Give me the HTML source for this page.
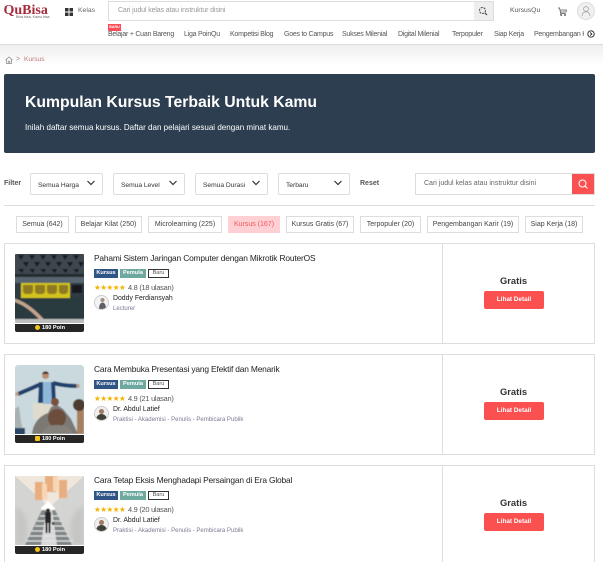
<!DOCTYPE html>
<html><head><meta charset="utf-8">
<style>
*{box-sizing:border-box}
html,body{margin:0;padding:0;width:603px;height:562px;overflow:hidden;background:#fff}
body{font-family:"Liberation Sans",sans-serif;color:#333}
#w{position:relative;width:603px;height:562px;overflow:hidden;background:#fff}
.a{position:absolute;white-space:nowrap}
.nav{top:30px;font-size:7px;letter-spacing:-.24px;color:#555;line-height:10px}
.sel{position:absolute;top:173px;height:22px;border:1px solid #ddd;border-radius:2px;background:#fff}
.sel span{position:absolute;left:7px;top:7px;font-size:6.7px;letter-spacing:-.03px;color:#333;white-space:nowrap;line-height:9px}
.sel svg{position:absolute;top:5px}
.chip{position:absolute;top:216px;height:17px;border:1px solid #ddd;font-size:7px;line-height:15px;text-align:center;color:#444;white-space:nowrap;background:#fff}
.card{position:absolute;left:4px;width:591px;height:101px;border:1px solid #ddd}
.div{position:absolute;left:437px;top:0;bottom:0;width:1px;background:#ddd}
.tt{position:absolute;left:89px;top:9px;font-size:8.4px;letter-spacing:-.17px;color:#222;white-space:nowrap;line-height:11px}
.b{position:absolute;top:25px;height:9px;font-size:5.6px;font-weight:bold;line-height:9px;text-align:center;color:#fff}
.st{position:absolute;left:89px;top:39px;font-size:7.6px;color:#f5b301;letter-spacing:-.55px;line-height:10px}
.rt{position:absolute;left:123px;top:37.500px;font-size:7.4px;letter-spacing:-.25px;color:#555;line-height:11px;white-space:nowrap}
.av{position:absolute;left:89px;top:51px;width:15px;height:15px;border-radius:50%;border:1px solid #ccc;overflow:hidden;background:#eee}
.nm{position:absolute;left:108px;top:49.500px;font-size:6.9px;color:#222;line-height:10px;white-space:nowrap}
.jb{position:absolute;left:108px;top:60.500px;font-size:6.050px;color:#7c7c95;line-height:8px;white-space:nowrap}
.th{position:absolute;left:10px;top:10px;width:69px;height:69px;overflow:hidden;border-radius:1px}
.th svg{display:block}
.pt{position:absolute;left:10px;top:80px;width:69px;height:8px;background:#262626;border-radius:0 0 2px 2px;color:#fff;font-size:5.6px;font-weight:bold;line-height:8px;padding-left:27px}
.pt i{position:absolute;left:20px;top:1px;width:5px;height:5px;background:#f3c318;border-radius:50%}
.gr{position:absolute;left:437px;width:143px;top:31px;text-align:center;font-size:9.4px;font-weight:bold;color:#333;line-height:12px}
.btn{position:absolute;left:479px;top:47px;width:60px;height:18px;background:#fb5050;border-radius:2px;color:#fff;font-size:6.4px;font-weight:bold;text-align:center;line-height:17px}
</style></head><body><div id="w">

<svg width="0" height="0" style="position:absolute"><defs><filter id="bl" x="-5%" y="-5%" width="110%" height="110%"><feGaussianBlur stdDeviation=".55"/></filter><filter id="bh" x="-20%" y="-20%" width="140%" height="140%"><feGaussianBlur stdDeviation="2"/></filter></defs></svg>

<!-- Header -->
<div class="a" style="left:0;top:0;width:603px;height:45px;background:#fff;border-bottom:1px solid #ddd"></div>
<div class="a" style="left:0;top:45px;width:603px;height:20px;background:linear-gradient(#eeeeee,#fff)"></div>
<div class="a" style="left:3.500px;top:2.500px;font-family:'Liberation Serif',serif;font-size:14px;font-weight:bold;color:#a82b3c;line-height:16px">QuBisa</div>
<div class="a" style="left:16px;top:14.500px;font-size:3.600px;color:#666;line-height:5px">Bisa bisa, Kamu bisa</div>
<svg class="a" style="left:65px;top:8px" width="8" height="8"><path fill="#333" d="M0 0h3.500v3.500H0zM4.500 0H8v3.500H4.500zM0 4.500h3.500V8H0zM4.500 4.500H8V8H4.500z"/></svg>
<div class="a" style="left:78px;top:5.500px;font-size:6.800px;color:#666;line-height:10px">Kelas</div>
<div class="a" style="left:108px;top:1px;width:386px;height:20px;border:1px solid #ddd;background:#fff"></div>
<div class="a" style="left:474px;top:2px;width:19px;height:18px;background:#eee"></div>
<svg class="a" style="left:478px;top:6px" width="10" height="10" viewBox="0 0 10 10"><circle cx="4.500" cy="4.500" r="3" fill="none" stroke="#444" stroke-width="1" stroke-dasharray="2 1"/><path d="M7 7l2 2" stroke="#444" stroke-width="1.200"/></svg>
<div class="a" style="left:118px;top:5.500px;font-size:7px;letter-spacing:-.12px;color:#999;line-height:10px">Cari judul kelas atau instruktur disini</div>
<div class="a" style="left:510px;top:5.500px;font-size:6.800px;color:#555;line-height:10px">KursusQu</div>
<svg class="a" style="left:556.500px;top:6px" width="11" height="11" viewBox="0 0 11 11" fill="none" stroke="#555" stroke-width=".7"><path d="M1 2h1.600l1 5.500h5M3 4h6.500l-.6 2H3.400"/><circle cx="4.200" cy="9" r=".7"/><circle cx="8" cy="9" r=".7"/></svg>
<div class="a" style="left:577px;top:2px;width:18px;height:18px;border-radius:50%;background:#f0f0f0;border:1px solid #ddd"></div>
<svg class="a" style="left:580px;top:5px" width="12" height="12" viewBox="0 0 12 12" fill="none" stroke="#999" stroke-width=".7"><circle cx="6" cy="4" r="2.400"/><path d="M2 11c.4-3 2-4.200 4-4.200s3.600 1.200 4 4.200"/></svg>

<div class="a nav" style="left:108px">Belajar + Cuan Bareng</div>
<div class="a" style="left:108px;top:24px;width:13px;height:7px;background:#fb4d55;color:#fff;font-size:3.600px;font-weight:bold;text-align:center;line-height:7px">BARU</div>
<div class="a nav" style="left:184px">Liga PoinQu</div>
<div class="a nav" style="left:230px">Kompetisi Blog</div>
<div class="a nav" style="left:284px">Goes to Campus</div>
<div class="a nav" style="left:342px">Sukses Milenial</div>
<div class="a nav" style="left:398px">Digital Milenial</div>
<div class="a nav" style="left:452px">Terpopuler</div>
<div class="a nav" style="left:494px">Siap Kerja</div>
<div class="a nav" style="left:534px;width:50px;overflow:hidden">Pengembangan Karir</div>
<svg class="a" style="left:587px;top:30px" width="8" height="8" viewBox="0 0 8 8" fill="none" stroke="#222" stroke-width=".9"><circle cx="4" cy="4" r="3.200"/><path d="M3.200 2.500L4.800 4 3.200 5.500"/></svg>

<!-- Breadcrumb -->
<svg class="a" style="left:5px;top:56px" width="8" height="8" viewBox="0 0 8 8" fill="none" stroke="#888" stroke-width=".7"><path d="M.5 4L4 1l3.500 3M1.500 3.500V7.500h5V3.500M3.200 7.500V5.200h1.600v2.300"/></svg>
<div class="a" style="left:16px;top:55px;font-size:7px;color:#a88;line-height:10px">&gt;</div>
<div class="a" style="left:24px;top:55px;font-size:6.600px;color:#c07a7a;line-height:10px">Kursus</div>

<!-- Hero -->
<div class="a" style="left:4px;top:74px;width:591px;height:79px;background:#2c3e50;border-radius:2px"></div>
<div class="a" style="left:25px;top:92.500px;font-size:15.750px;font-weight:bold;color:#fff;line-height:19px">Kumpulan Kursus Terbaik Untuk Kamu</div>
<div class="a" style="left:25px;top:122.500px;font-size:8.050px;color:#fff;line-height:10px">Inilah daftar semua kursus. Daftar dan pelajari sesuai dengan minat kamu.</div>

<!-- Filters -->
<div class="a" style="left:4px;top:179px;font-size:7px;font-weight:bold;color:#555;line-height:9px">Filter</div>
<div class="sel" style="left:30px;width:73px"><span>Semua Harga</span><svg style="left:55px" width="10" height="8" viewBox="0 0 10 8"><path d="M1.500 2l3.500 3.500L8.500 2" fill="none" stroke="#333" stroke-width="1.200"/></svg></div>
<div class="sel" style="left:113px;width:72px"><span>Semua Level</span><svg style="left:54px" width="10" height="8" viewBox="0 0 10 8"><path d="M1.500 2l3.500 3.500L8.500 2" fill="none" stroke="#333" stroke-width="1.200"/></svg></div>
<div class="sel" style="left:195px;width:73px"><span>Semua Durasi</span><svg style="left:55px" width="10" height="8" viewBox="0 0 10 8"><path d="M1.500 2l3.500 3.500L8.500 2" fill="none" stroke="#333" stroke-width="1.200"/></svg></div>
<div class="sel" style="left:278px;width:72px"><span>Terbaru</span><svg style="left:54px" width="10" height="8" viewBox="0 0 10 8"><path d="M1.500 2l3.500 3.500L8.500 2" fill="none" stroke="#333" stroke-width="1.200"/></svg></div>
<div class="a" style="left:360px;top:179px;font-size:7px;font-weight:bold;color:#555;line-height:9px">Reset</div>
<div class="a" style="left:415px;top:173px;width:180px;height:22px;border:1px solid #ddd;background:#fff"></div>
<div class="a" style="left:424px;top:179px;font-size:7px;color:#666;line-height:9px">Cari judul kelas atau instruktur disini</div>
<div class="a" style="left:572px;top:174px;width:22px;height:20px;background:#fb5050"></div>
<svg class="a" style="left:577px;top:178px" width="12" height="12" viewBox="0 0 12 12" fill="none" stroke="#fff" stroke-width="1"><circle cx="5.500" cy="5.500" r="3.500"/><path d="M8 8l2.500 2.500"/></svg>
<div class="a" style="left:4px;top:205px;width:591px;height:1px;background:#ddd"></div>

<!-- Chips -->
<div class="chip" style="left:16px;width:53px">Semua (642)</div>
<div class="chip" style="left:75px;width:67px">Belajar Kilat (250)</div>
<div class="chip" style="left:148px;width:74px">Microlearning (225)</div>
<div class="chip" style="left:228px;width:52px;background:#ffd0d3;border-color:#ffd0d3;color:#f0575f">Kursus (167)</div>
<div class="chip" style="left:286px;width:68px">Kursus Gratis (67)</div>
<div class="chip" style="left:360px;width:61px">Terpopuler (20)</div>
<div class="chip" style="left:427px;width:92px">Pengembangan Karir (19)</div>
<div class="chip" style="left:525px;width:58px">Siap Kerja (18)</div>

<!-- Card 1 -->
<div class="card" style="top:243px">
  <div class="div"></div>
  <div class="th"><svg width="69" height="69" viewBox="0 0 69 69"><g filter="url(#bl)">
    <rect x="-2" y="-2" width="73" height="73" fill="#2e3b42"/>
    <rect x="-2" y="-2" width="73" height="22" fill="#3d474d"/>
    <path fill="#161c20" d="M3 1h6l-3 5zM14 1h6l-3 5zM25 1h6l-3 5zM36 1h6l-3 5zM47 1h6l-3 5zM58 1h6l-3 5zM8 8h6l-3 5zM19 8h6l-3 5zM30 8h6l-3 5zM41 8h6l-3 5zM52 8h6l-3 5zM63 8h6l-3 5zM3 15h6l-2 4zM14 15h6l-2 4zM25 15h6l-2 4zM36 15h6l-2 4zM47 15h6l-2 4zM58 15h6l-2 4z"/>
    <rect x="-2" y="20" width="73" height="3" fill="#20292e"/>
    <rect x="-2" y="23" width="73" height="6" fill="#566570"/>
    <rect x="6" y="29" width="49" height="15" fill="#d2c21e"/>
    <path fill="#8d7a24" d="M8 31h10v7l-2 2h-6l-2-2zM20 31h10v7l-2 2h-6l-2-2zM32 31h10v7l-2 2h-6l-2-2zM44 31h9v7l-2 2h-5l-2-2z"/>
    <rect x="57" y="31" width="10" height="8" fill="#15191b"/>
    <rect x="-2" y="44" width="73" height="21" fill="#2b3a41"/>
    <path d="M-1 46C12 50 22 60 30 69" stroke="#c2a48e" stroke-width="3.500" fill="none"/>
    <rect x="-2" y="65" width="73" height="6" fill="#bdbdbd"/>
  </g></svg></div>
  <div class="pt"><i></i>180 Poin</div>
  <div class="tt">Pahami Sistem Jaringan Computer dengan Mikrotik RouterOS</div>
  <div class="b" style="left:89px;width:24px;background:#2f5586">Kursus</div>
  <div class="b" style="left:115px;width:26px;background:#6ea9a0">Pemula</div>
  <div class="b" style="left:143px;width:21px;background:#fff;border:1px solid #333;color:#555;font-weight:normal;line-height:7px">Baru</div>
  <div class="st">★★★★★</div><div class="rt">4.8 (18 ulasan)</div>
  <div class="av"><svg width="13" height="13" viewBox="0 0 13 13"><rect width="13" height="13" fill="#f2f2f2"/><circle cx="7.500" cy="4" r="2" fill="#a89080"/><path d="M4 13c0-5 2-6.500 3.500-6.500S11 8 11 13z" fill="#5e6268"/></svg></div>
  <div class="nm">Doddy Ferdiansyah</div>
  <div class="jb">Lecturer</div>
  <div class="gr">Gratis</div>
  <div class="btn">Lihat Detail</div>
</div>

<!-- Card 2 -->
<div class="card" style="top:354px">
  <div class="div"></div>
  <div class="th" style="border-radius:3px 3px 0 0"><svg width="69" height="69" viewBox="0 0 69 69"><g filter="url(#bl)">
    <rect x="-2" y="-2" width="73" height="73" fill="#c9d9de"/>
    <rect x="18" y="38" width="18" height="16" fill="#e0dccd"/>
    <path d="M26 19Q15 24 3 29" stroke="#20406c" stroke-width="4" fill="none"/>
    <path d="M38 18Q50 21 62 21" stroke="#20406c" stroke-width="4" fill="none"/>
    <circle cx="2" cy="29" r="1.800" fill="#c09a7c"/><circle cx="63" cy="21" r="1.800" fill="#c09a7c"/>
    <path d="M24 17h16l1 21H23z" fill="#24426f"/>
    <path d="M28 17h8l1 22h-9z" fill="#8fb8d8"/>
    <circle cx="30.500" cy="10.500" r="3.500" fill="#b98e70"/>
    <path d="M27 9c1-3.500 6-3.500 7 0z" fill="#4a3322"/>
    <path d="M62 69V44l7-3v28z" fill="#a8805f"/>
    <circle cx="64" cy="40" r="6" fill="#4d3a30"/>
    <path d="M17 69c1-10 7-18 16-21l3-6 6-2 6 4 8 10 7 15z" fill="#7b7873"/>
    <circle cx="40" cy="37" r="4" fill="#7a4f3c"/>
    <circle cx="42" cy="53" r="9" fill="#6d4e3a"/>
    <path d="M27 69c1-6 7-9 15-9s15 3 16 9z" fill="#85827c"/>
    <path d="M0 44l4-3 2 16 3 12H-2z" fill="#a9b2b2"/>
    <rect x="-2" y="63" width="12" height="8" fill="#2c4767"/>
  </g></svg></div>
  <div class="pt"><i style="border-radius:1px"></i>180 Poin</div>
  <div class="tt">Cara Membuka Presentasi yang Efektif dan Menarik</div>
  <div class="b" style="left:89px;width:24px;background:#2f5586">Kursus</div>
  <div class="b" style="left:115px;width:26px;background:#6ea9a0">Pemula</div>
  <div class="b" style="left:143px;width:21px;background:#fff;border:1px solid #333;color:#555;font-weight:normal;line-height:7px">Baru</div>
  <div class="st">★★★★★</div><div class="rt">4.9 (21 ulasan)</div>
  <div class="av"><svg width="13" height="13" viewBox="0 0 13 13"><rect width="13" height="13" fill="#eee"/><circle cx="6.500" cy="4.500" r="2.500" fill="#a07a60"/><path d="M1 13c0-4 3-6 5.500-6S12 9 12 13z" fill="#3f4238"/></svg></div>
  <div class="nm">Dr. Abdul Latief</div>
  <div class="jb">Praktisi - Akademisi - Penulis - Pembicara Publik</div>
  <div class="gr">Gratis</div>
  <div class="btn">Lihat Detail</div>
</div>

<!-- Card 3 -->
<div class="card" style="top:465px;height:110px">
  <div class="div"></div>
  <div class="th"><svg width="69" height="69" viewBox="0 0 69 69">
    <rect width="69" height="69" fill="#d4d4d2"/>
    <path d="M0 0h69L36 30H33z" fill="#efe6dc"/>
    <path d="M0 30C10 35 16 45 10 69H0zM69 30C58 35 52 45 58 69h11z" fill="#c6c6c4" filter="url(#bh)"/>
    <path d="M20 6h8v18h-8zM44 4h8v18h-8zM30 0h11v16H30z" fill="#e8ae80" filter="url(#bl)"/>
    <path d="M27 8h5v15h-5zM38 0h5v15h-5z" fill="#f8d6b2" filter="url(#bl)"/>
    <g filter="url(#bl)">
    <path d="M33 25l7 7v2H26v-2z" fill="#fff"/>
    <path d="M27 34h13l17 35H10z" fill="#7f8486"/>
    <path d="M31 34h6l5 35H26z" fill="#d8d8d8"/>
    <path d="M25 40h18M22 45h25M20 50h29M17 55h34M14 60h40M11 65h47" stroke="#e2e2e2" stroke-width="1.200"/>
    <rect x="30" y="36" width="6" height="11" fill="#262628"/>
    <circle cx="33" cy="34.500" r="2" fill="#262628"/>
    <rect x="30.500" y="46" width="2" height="11" fill="#1e1e20"/><rect x="33.500" y="46" width="2" height="11" fill="#1e1e20"/>
    <rect x="37" y="46" width="2" height="3" fill="#222"/>
    </g>
  </svg></div>
  <div class="pt"><i></i>180 Poin</div>
  <div class="tt">Cara Tetap Eksis Menghadapi Persaingan di Era Global</div>
  <div class="b" style="left:89px;width:24px;background:#2f5586">Kursus</div>
  <div class="b" style="left:115px;width:26px;background:#6ea9a0">Pemula</div>
  <div class="b" style="left:143px;width:21px;background:#fff;border:1px solid #333;color:#555;font-weight:normal;line-height:7px">Baru</div>
  <div class="st">★★★★★</div><div class="rt">4.9 (20 ulasan)</div>
  <div class="av"><svg width="13" height="13" viewBox="0 0 13 13"><rect width="13" height="13" fill="#eee"/><circle cx="6.500" cy="4.500" r="2.500" fill="#a07a60"/><path d="M1 13c0-4 3-6 5.500-6S12 9 12 13z" fill="#3f4238"/></svg></div>
  <div class="nm">Dr. Abdul Latief</div>
  <div class="jb">Praktisi - Akademisi - Penulis - Pembicara Publik</div>
  <div class="gr">Gratis</div>
  <div class="btn">Lihat Detail</div>
</div>

</div></body></html>
